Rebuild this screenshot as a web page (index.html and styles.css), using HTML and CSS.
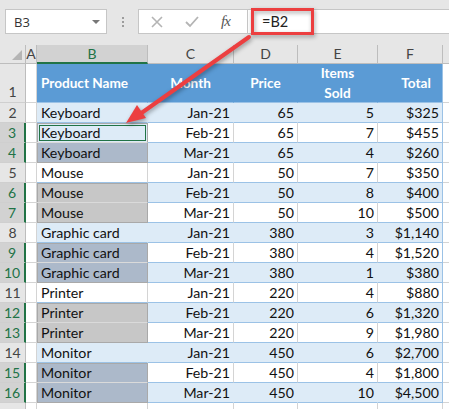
FILE: index.html
```html
<!DOCTYPE html>
<html lang="en">
<head>
    <meta charset="UTF-8">
    <meta name="viewport" content="width=device-width, initial-scale=1.0">
    <title>Sheet</title>

    <link rel="stylesheet" href="styles.css">

</head>
<body>

    <div id="wrapper">

        <div id="formula_bar">

            <div class="name_box">
                <span>B3</span>
                <span class="caret"></span>
            </div>

            <div class="grip"><i></i><i></i><i></i></div>

            <div class="formula_box">
                <div class="fx_buttons">
                    <svg class="btn_icon" width="12" height="12" viewBox="0 0 12 12">
                        <path d="M1 1 L11 11 M11 1 L1 11" stroke="#b4b4b4" stroke-width="1.6" fill="none"/>
                    </svg>
                    <svg class="btn_icon" width="14" height="12" viewBox="0 0 14 12">
                        <path d="M1 6 L5 10 L13 1" stroke="#b4b4b4" stroke-width="1.8" fill="none"/>
                    </svg>
                    <span class="fx">fx</span>
                </div>
                <div class="formula_input">=B2</div>
            </div>

        </div>

        <div id="sheet">

            <div class="row col_heads">
                <div class="corner"><span class="tri"></span></div>
                <div class="ch">A</div>
                <div class="ch sel">B</div>
                <div class="ch">C</div>
                <div class="ch">D</div>
                <div class="ch">E</div>
                <div class="ch">F</div>
                <div class="ch"></div>
            </div>

            <div class="row head_row">
                <div class="rh">1</div>
                <div class="a"></div>
                <div class="th left">Product Name</div>
                <div class="th">Month</div>
                <div class="th">Price</div>
                <div class="th">Items<br>Sold</div>
                <div class="th total">Total</div>
                <div class="g"></div>
            </div>

            <div class="row band">
                <div class="rh">2</div><div class="a"></div>
                <div class="td left">Keyboard</div><div class="td">Jan-21</div><div class="td">65</div><div class="td">5</div><div class="td last">$325</div>
                <div class="g"></div>
            </div>

            <div class="row">
                <div class="rh sel">3</div><div class="a"></div>
                <div class="td left active">Keyboard</div><div class="td">Feb-21</div><div class="td">65</div><div class="td">7</div><div class="td last">$455</div>
                <div class="g"></div>
            </div>

            <div class="row band">
                <div class="rh sel">4</div><div class="a"></div>
                <div class="td left pick blue bottom">Keyboard</div><div class="td">Mar-21</div><div class="td">65</div><div class="td">4</div><div class="td last">$260</div>
                <div class="g"></div>
            </div>

            <div class="row">
                <div class="rh">5</div><div class="a"></div>
                <div class="td left">Mouse</div><div class="td">Jan-21</div><div class="td">50</div><div class="td">7</div><div class="td last">$350</div>
                <div class="g"></div>
            </div>

            <div class="row band">
                <div class="rh sel">6</div><div class="a"></div>
                <div class="td left pick gray top">Mouse</div><div class="td">Feb-21</div><div class="td">50</div><div class="td">8</div><div class="td last">$400</div>
                <div class="g"></div>
            </div>

            <div class="row">
                <div class="rh sel">7</div><div class="a"></div>
                <div class="td left pick gray bottom">Mouse</div><div class="td">Mar-21</div><div class="td">50</div><div class="td">10</div><div class="td last">$500</div>
                <div class="g"></div>
            </div>

            <div class="row band">
                <div class="rh">8</div><div class="a"></div>
                <div class="td left">Graphic card</div><div class="td">Jan-21</div><div class="td">380</div><div class="td">3</div><div class="td last">$1,140</div>
                <div class="g"></div>
            </div>

            <div class="row">
                <div class="rh sel">9</div><div class="a"></div>
                <div class="td left pick blue top">Graphic card</div><div class="td">Feb-21</div><div class="td">380</div><div class="td">4</div><div class="td last">$1,520</div>
                <div class="g"></div>
            </div>

            <div class="row band">
                <div class="rh sel">10</div><div class="a"></div>
                <div class="td left pick blue bottom">Graphic card</div><div class="td">Mar-21</div><div class="td">380</div><div class="td">1</div><div class="td last">$380</div>
                <div class="g"></div>
            </div>

            <div class="row">
                <div class="rh">11</div><div class="a"></div>
                <div class="td left">Printer</div><div class="td">Jan-21</div><div class="td">220</div><div class="td">4</div><div class="td last">$880</div>
                <div class="g"></div>
            </div>

            <div class="row band">
                <div class="rh sel">12</div><div class="a"></div>
                <div class="td left pick gray top">Printer</div><div class="td">Feb-21</div><div class="td">220</div><div class="td">6</div><div class="td last">$1,320</div>
                <div class="g"></div>
            </div>

            <div class="row">
                <div class="rh sel">13</div><div class="a"></div>
                <div class="td left pick gray bottom">Printer</div><div class="td">Mar-21</div><div class="td">220</div><div class="td">9</div><div class="td last">$1,980</div>
                <div class="g"></div>
            </div>

            <div class="row band">
                <div class="rh">14</div><div class="a"></div>
                <div class="td left">Monitor</div><div class="td">Jan-21</div><div class="td">450</div><div class="td">6</div><div class="td last">$2,700</div>
                <div class="g"></div>
            </div>

            <div class="row">
                <div class="rh sel">15</div><div class="a"></div>
                <div class="td left pick blue top">Monitor</div><div class="td">Feb-21</div><div class="td">450</div><div class="td">4</div><div class="td last">$1,800</div>
                <div class="g"></div>
            </div>

            <div class="row band">
                <div class="rh sel">16</div><div class="a"></div>
                <div class="td left pick blue bottom">Monitor</div><div class="td">Mar-21</div><div class="td">450</div><div class="td">10</div><div class="td last">$4,500</div>
                <div class="g"></div>
            </div>

            <div class="row empty">
                <div class="rh"></div><div class="a"></div>
                <div class="td"></div><div class="td"></div><div class="td"></div><div class="td"></div><div class="td"></div>
                <div class="g"></div>
            </div>

        </div>

        <!-- callout drawn over the sheet -->
        <svg id="callout" width="449" height="409" viewBox="0 0 449 409">
            <rect x="252.5" y="9.5" width="60" height="24" fill="none" stroke="#ec3f40" stroke-width="3"/>
            <line x1="249" y1="37" x2="140" y2="114" stroke="#ec3f40" stroke-width="4" stroke-linecap="round"/>
            <polygon points="126,123 146,118 137,105" fill="#ec3f40"/>
        </svg>

    </div>

</body>
</html>
```

FILE: styles.css
```css
*{
    box-sizing: border-box;
}

body{
    margin: 0;
    padding: 0;

    width: 449px;
    height: 409px;
    overflow: hidden;

    background: #ffffff;
    font-family: "Lato", sans-serif;
}

#wrapper{
    position: relative;
    width: 449px;
    height: 409px;
    overflow: hidden;
}

/* formula bar */

#formula_bar{
    height: 45px;
    padding: 9px 0 0 5px;

    display: flex;
    align-items: flex-start;

    background: #e6e6e6;
}

.name_box{
    width: 102px;
    height: 25px;
    padding: 0 6px 0 8px;

    display: flex;
    align-items: center;
    justify-content: space-between;

    background: #fff;
    border: 1px solid #c6c6c6;

    font-family: "Open Sans", sans-serif;
    font-size: 13px;
    color: #333;
}

.caret{
    width: 0;
    height: 0;
    border-left: 4px solid transparent;
    border-right: 4px solid transparent;
    border-top: 4px solid #777;
}

.grip{
    width: 31px;
    height: 25px;

    display: flex;
    flex-direction: column;
    align-items: center;
    justify-content: center;
    gap: 2px;

    i{
        width: 2px;
        height: 2px;
        background: #9c9c9c;
    }
}

.formula_box{
    flex: 1;
    height: 25px;

    display: flex;

    background: #fff;
    border: 1px solid #c6c6c6;
    border-right: none;
}

.fx_buttons{
    width: 109px;
    padding-left: 12px;

    display: flex;
    align-items: center;

    border-right: 1px solid #c6c6c6;

    .btn_icon{
        margin-right: 22px;
    }
}

.fx{
    font-family: "Liberation Serif", serif;
    font-style: italic;
    font-size: 15px;
    color: #555;
    letter-spacing: -1px;
}

.formula_input{
    padding-left: 14px;

    display: flex;
    align-items: center;

    font-size: 14.5px;
    color: #222;
}

/* grid */

.row{
    display: grid;
    grid-template-columns: 26px 11px 111px 86px 64px 80px 65px 40px;
    height: 20px;

    font-size: 14.2px;
    color: #111;
}

.row > div{
    border-right: 1px solid #d4d4d4;
    border-bottom: 1px solid #9bc2e6;
    overflow: hidden;
    white-space: nowrap;
}

.col_heads{
    height: 19px;

    .corner{
        position: relative;
        background: #e6e6e6;
        border-right: 1px solid #bdbdbd;
        border-bottom: 1px solid #bdbdbd;
    }

    .tri{
        position: absolute;
        right: 3px;
        bottom: 3px;
        width: 0;
        height: 0;
        border-left: 10px solid transparent;
        border-bottom: 10px solid #b5b5b5;
    }

    .ch{
        background: #e6e6e6;
        border-right: 1px solid #bdbdbd;
        border-bottom: 1px solid #bdbdbd;

        text-align: center;
        font-size: 14px;
        line-height: 18px;
        color: #444;
    }

    .ch.sel{
        background: #d2d2d2;
        color: #217346;
        border-bottom: 2px solid #217346;
    }
}

.rh{
    background: #e6e6e6;
    text-align: center;
    font-size: 14px;
    line-height: 20px;
    color: #444;

    border-right-color: #bdbdbd !important;
    border-bottom-color: #cfcfcf !important;
}

.rh.sel{
    background: #d2d2d2;
    color: #217346;
    border-right: 2px solid #217346 !important;
}

.row > .a,
.row > .g{
    border-bottom-color: #d4d4d4;
}

.td{
    padding: 0 3px;
    text-align: right;
    line-height: 20px;
}

.td.left{
    padding-left: 4px;
    text-align: left;
}

.td.last{
    border-right-color: #9bc2e6 !important;
}

.band .td{
    background: #ddebf7;
    border-right-color: #ddebf7;
}

/* selected cells in column B */

.pick{
    box-shadow: inset 1px 0 #a9a9a9;
    border-right-color: #a9a9a9 !important;
    border-bottom-color: #dadada !important;
}

.pick.blue{
    background: #acb9ca !important;
}

.pick.gray{
    background: #c7c7c7 !important;
}

.pick.top{
    box-shadow: inset 1px 1px #a9a9a9;
}

.pick.bottom{
    border-bottom-color: #a9a9a9 !important;
}

.td.active{
    background: #ddebf7;
    box-shadow: inset 1px 1px #a9a9a9;
    border-right-color: #a9a9a9;
    border-bottom-color: #dadada;
    outline: 1.5px solid #217346;
    outline-offset: -3px;
}

/* header row of the table */

.head_row{
    height: 39px;

    .rh{
        padding-top: 18px;
    }

    .th{
        display: flex;
        align-items: center;
        justify-content: center;

        background: #5b9bd5;
        border-right-color: #5b9bd5;
        border-bottom-color: #9bc2e6;

        color: #fff;
        font-size: 13.6px;
        font-weight: bold;
        line-height: 20px;
        text-align: center;
    }

    .th.left{
        justify-content: flex-start;
        padding-left: 4px;
    }

    .th.total{
        padding-left: 12px;
        border-right-color: #9bc2e6;
    }
}

.empty .td{
    border-bottom-color: #d4d4d4;
}

/* red callout on top */

#callout{
    position: absolute;
    top: 0;
    left: 0;
    pointer-events: none;
    filter: drop-shadow(1px 2px 2px rgba(0, 0, 0, 0.35));
}
```
